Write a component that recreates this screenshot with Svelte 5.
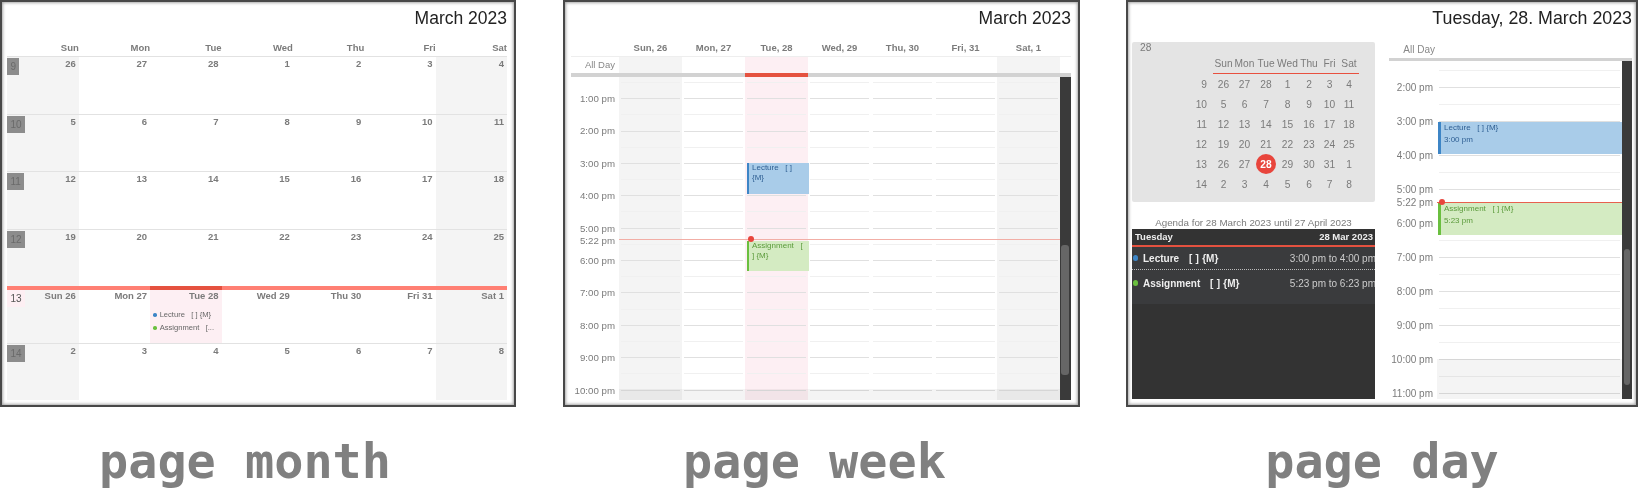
<script>
  const dayNames = ['Sun', 'Mon', 'Tue', 'Wed', 'Thu', 'Fri', 'Sat'];

  const monthRows = [
    { week: 9, days: ['26', '27', '28', '1', '2', '3', '4'] },
    { week: 10, days: ['5', '6', '7', '8', '9', '10', '11'] },
    { week: 11, days: ['12', '13', '14', '15', '16', '17', '18'] },
    { week: 12, days: ['19', '20', '21', '22', '23', '24', '25'] },
    { week: 13, current: true, days: ['Sun 26', 'Mon 27', 'Tue 28', 'Wed 29', 'Thu 30', 'Fri 31', 'Sat 1'] },
    { week: 14, days: ['2', '3', '4', '5', '6', '7', '8'] },
  ];

  const weekHead = ['Sun, 26', 'Mon, 27', 'Tue, 28', 'Wed, 29', 'Thu, 30', 'Fri, 31', 'Sat, 1'];
  const weekHours = ['1:00 pm', '2:00 pm', '3:00 pm', '4:00 pm', '5:00 pm', '6:00 pm', '7:00 pm', '8:00 pm', '9:00 pm', '10:00 pm'];
  const dayHours = ['2:00 pm', '3:00 pm', '4:00 pm', '5:00 pm', '6:00 pm', '7:00 pm', '8:00 pm', '9:00 pm', '10:00 pm', '11:00 pm'];

  const miniRows = [
    [9, 26, 27, 28, 1, 2, 3, 4],
    [10, 5, 6, 7, 8, 9, 10, 11],
    [11, 12, 13, 14, 15, 16, 17, 18],
    [12, 19, 20, 21, 22, 23, 24, 25],
    [13, 26, 27, 28, 29, 30, 31, 1],
    [14, 2, 3, 4, 5, 6, 7, 8],
  ];

  // the triple spaces are in the event titles themselves
  const lecture = 'Lecture   [ ] {M}';
  const assignment = 'Assignment   [ ] {M}';

  // half-hour lines: odd ones fall on the hour
  const slots = Array.from({ length: 22 }, (_, i) => i);
</script>

{#snippet lines()}
  {#each slots as i}
    <div class="slot" class:hour={i % 2 === 1}></div>
  {/each}
{/snippet}

<div class="page">
  <figure class="shot month">
    <div class="panel">
      <div class="title">March 2023</div>
      <div class="month-head">
        {#each dayNames as name}
          <div>{name}</div>
        {/each}
      </div>
      {#each monthRows as row}
        <div class="month-row" class:current={row.current}>
          <span class="wk">{row.week}</span>
          {#each row.days as day, i}
            <div class="cell" class:weekend={i === 0 || i === 6} class:today={row.current && i === 2}>
              <div class="num">{day}</div>
              {#if row.current && i === 2}
                <div class="chip first"><i class="dot blue"></i><span>{lecture}</span></div>
                <div class="chip"><i class="dot green"></i><span>{'Assignment   [...'}</span></div>
              {/if}
            </div>
          {/each}
        </div>
      {/each}
    </div>
    <figcaption>page month</figcaption>
  </figure>

  <figure class="shot week">
    <div class="panel">
      <div class="title">March 2023</div>
      <div class="week-head">
        <div class="gutter"></div>
        {#each weekHead as name}
          <div class="head-cell">{name}</div>
        {/each}
      </div>
      <div class="allday">
        <div class="gutter allday-label">All Day</div>
        {#each weekHead as _, i}
          <div class="col" class:weekend={i === 0 || i === 6} class:today={i === 2}></div>
        {/each}
      </div>
      <div class="bar"><span class="bar-today"></span></div>
      <div class="grid">
        <div class="gutter hours">
          {#each weekHours as h}
            <div class="hour-label">{h}</div>
          {/each}
        </div>
        {#each weekHead as _, i}
          <div class="col" class:weekend={i === 0 || i === 6} class:today={i === 2}>
            {@render lines()}
          </div>
        {/each}
        <div class="scroll"><div class="thumb"></div></div>

        <div class="late"></div>
        <div class="event lecture">{lecture}</div>
        <div class="event assignment">{assignment}</div>
        <div class="now-line"></div>
        <div class="now-dot"></div>
        <div class="now-label">5:22 pm</div>
      </div>
    </div>
    <figcaption>page week</figcaption>
  </figure>

  <figure class="shot day">
    <div class="panel">
      <div class="title">Tuesday, 28. March 2023</div>
      <div class="day-body">
        <div class="side">
          <div class="mini">
            <div class="mini-label">28</div>
            <div class="mini-grid">
              <div></div>
              {#each dayNames as name}
                <div class="mini-name">{name}</div>
              {/each}
              {#each miniRows as row, r}
                {#each row as n, c}
                  <div class="mini-cell" class:mini-wk={c === 0}>
                    {#if r === 4 && c === 3}
                      <span class="mini-today">{n}</span>
                    {:else}
                      {n}
                    {/if}
                  </div>
                {/each}
              {/each}
            </div>
          </div>
          <div class="agenda-title">Agenda for 28 March 2023 until 27 April 2023</div>
          <div class="agenda">
            <div class="agenda-head"><span>Tuesday</span><span>28 Mar 2023</span></div>
            <div class="agenda-list">
              <div class="agenda-row dotted">
                <i class="agenda-dot blue"></i>
                <span class="agenda-name">{lecture}</span>
                <span class="agenda-time">3:00 pm to 4:00 pm</span>
              </div>
              <div class="agenda-row">
                <i class="agenda-dot green"></i>
                <span class="agenda-name">{assignment}</span>
                <span class="agenda-time">5:23 pm to 6:23 pm</span>
              </div>
            </div>
          </div>
        </div>

        <div class="main">
          <div class="day-allday">All Day</div>
          <div class="bar"></div>
          <div class="grid">
            <div class="gutter hours">
              {#each dayHours as h}
                <div class="hour-label">{h}</div>
              {/each}
            </div>
            <div class="col wide">
              {@render lines()}
            </div>
            <div class="scroll"><div class="thumb"></div></div>

            <div class="late"></div>
            <div class="event lecture"><div>{lecture}</div><div>3:00 pm</div></div>
            <div class="event assignment"><div>{assignment}</div><div>5:23 pm</div></div>
            <div class="now-line"></div>
            <div class="now-dot"></div>
            <div class="now-label">5:22 pm</div>
          </div>
        </div>
      </div>
    </div>
    <figcaption>page day</figcaption>
  </figure>
</div>

<style>
  :global(body) {
    margin: 0;
    background: #fff;
  }

  .page {
    display: flex;
    width: 1641px;
    height: 489px;
    overflow: hidden;
    font-family: "Liberation Sans", Arial, sans-serif;
    font-size: 9.5px;
    color: #7b7b7b;
  }

  .shot {
    margin: 0;
    flex: none;
  }
  .shot.month { width: 516px; }
  .shot.week { width: 517px; margin-left: 47px; }
  .shot.day { width: 512px; margin-left: 46px; }

  .panel {
    box-sizing: border-box;
    height: 407px;
    border: 2px solid #484848;
    box-shadow: inset 0 0 3px 1px #a8a8a8;
    background: #fff;
    filter: blur(0.3px);
  }
  .month .panel { padding: 0 7px 0 5.4px; }
  .week .panel { padding: 0 7px 0 6px; }
  .day .panel { padding: 0 4px 0 4px; }

  figcaption {
    margin-top: 26px;
    font-family: "DejaVu Sans Mono", "Liberation Mono", monospace;
    font-weight: bold;
    font-size: 48.5px;
    line-height: 56px;
    color: #808080;
    text-align: center;
    white-space: pre;
  }
  .month figcaption { padding-right: 26px; }
  .week figcaption { padding-right: 14px; }

  .title {
    height: 31px;
    line-height: 32px;
    font-size: 17.5px;
    color: #222;
    text-align: right;
  }
  .day .title { font-size: 17.8px; }

  /* month */
  .month-head {
    display: grid;
    grid-template-columns: repeat(7, 1fr);
    box-sizing: border-box;
    height: 24px;
    padding-top: 8px;
    line-height: 14px;
    font-weight: bold;
    text-align: right;
    border-bottom: 1px solid #e2e2e2;
  }
  .month-row {
    position: relative;
    display: grid;
    grid-template-columns: repeat(7, 1fr);
    box-sizing: border-box;
    height: 57.2px;
    border-top: 1px solid #e2e2e2;
  }
  .month-head + .month-row { border-top: 0; }
  .month-row.current {
    border-top: 4px solid #ff7f73;
  }
  .cell {
    padding: 0 3px;
    position: relative;
  }
  .cell.weekend { background: #f4f4f4; }
  .cell.today { background: #fdeff3; }
  .current .cell.today::before {
    content: "";
    position: absolute;
    left: 0;
    right: 0;
    top: -4px;
    height: 4px;
    background: #e5513f;
  }
  .num {
    line-height: 14px;
    font-weight: bold;
    text-align: right;
  }
  .current .num { line-height: 12px; }
  .wk {
    position: absolute;
    left: 0;
    top: 1px;
    z-index: 1;
    height: 17px;
    padding: 0 3px;
    line-height: 17px;
    font-size: 10px;
    background: #8c8c8c;
    color: #6a6a6a;
  }
  .current .wk {
    top: 0;
    background: #fdeff3;
    color: #555;
  }
  .chip {
    display: flex;
    align-items: center;
    gap: 3px;
    height: 13px;
    font-size: 7.6px;
    color: #666;
    white-space: pre;
    overflow: hidden;
  }
  .chip.first { margin-top: 6.5px; }
  .dot {
    flex: none;
    width: 3.5px;
    height: 3.5px;
    border-radius: 50%;
  }
  .blue { background: #3d85c6; }
  .green { background: #6abf3f; }

  /* week */
  .week-head, .allday { display: flex; }
  .week-head {
    box-sizing: border-box;
    height: 24px;
    padding-top: 8px;
    line-height: 14px;
    font-weight: bold;
    border-bottom: 1px solid #eee;
  }
  .head-cell {
    width: 63px;
    text-align: center;
  }
  .gutter {
    flex: none;
    box-sizing: border-box;
    width: 48px;
  }
  .allday { height: 16.3px; }
  .allday-label {
    padding-right: 4px;
    line-height: 16px;
    text-align: right;
    color: #888;
  }
  .col {
    flex: none;
    width: 63px;
  }
  .col.weekend { background: #f4f4f4; }
  .col.today { background: #fdeff3; }
  .col.wide { width: 185px; }
  .bar {
    height: 3.7px;
    background: #d2d2d2;
    position: relative;
  }
  .bar-today {
    position: absolute;
    left: 174.4px;
    width: 63px;
    top: 0;
    bottom: 0;
    background: #e5513f;
  }
  .grid {
    position: relative;
    display: flex;
    height: 323px;
    overflow: hidden;
  }
  .hours {
    padding-right: 4px;
    padding-top: 5px;
    text-align: right;
    font-size: 9.7px;
  }
  .hour-label {
    height: 32.4px;
    line-height: 34px;
    white-space: nowrap;
  }
  .slot {
    box-sizing: border-box;
    height: 16.2px;
    margin: 0 2px;
    border-top: 1px solid #f0f0f0;
  }
  .slot.hour { border-top-color: #e0e0e0; }
  .week .slot:first-child { margin-top: 5px; }
  .scroll {
    flex: none;
    width: 11px;
    background: #3a3a3a;
  }
  .thumb {
    width: 8px;
    height: 130px;
    margin: 168px 0 0 1px;
    border-radius: 3px;
    background: #666;
  }
  .late {
    position: absolute;
    left: 48px;
    width: 441px;
    top: 312px;
    bottom: 0;
    background: rgba(0, 0, 0, 0.045);
  }
  .event {
    position: absolute;
    box-sizing: border-box;
    left: 176px;
    width: 62px;
    padding: 0 5.5px 0 3px;
    border-left: 2px solid;
    font-size: 8px;
    line-height: 10px;
    white-space: pre-wrap;
  }
  .lecture {
    top: 86px;
    height: 31.3px;
    background: #a9cce9;
    border-color: #3d85c6;
    color: #2f5f93;
  }
  .assignment {
    top: 163.7px;
    height: 30.3px;
    background: #d4ebc2;
    border-color: #6abf3f;
    color: #5b9a3b;
  }
  .now-line {
    position: absolute;
    left: 48px;
    width: 441px;
    top: 162px;
    height: 1px;
    background: #f2aea6;
  }
  .now-dot {
    position: absolute;
    left: 176.6px;
    top: 159.5px;
    width: 6px;
    height: 6px;
    border-radius: 50%;
    background: #e8453c;
  }
  .now-label {
    position: absolute;
    left: 0;
    width: 44px;
    top: 157px;
    line-height: 13px;
    font-size: 9.7px;
    text-align: right;
    background: #fff;
  }

  /* day */
  .day-body {
    display: flex;
    gap: 14px;
  }
  .side {
    flex: none;
    width: 243px;
  }
  .mini {
    box-sizing: border-box;
    height: 160px;
    margin-top: 9px;
    padding: 0 16px 0 8px;
    border-radius: 2px;
    background: #e4e4e4;
    font-size: 10.2px;
    color: #7b7b7b;
  }
  .mini-label {
    height: 12px;
    line-height: 12px;
  }
  .mini-grid {
    display: grid;
    grid-template-columns: 73px 21px 21px 22px 21px 22px 19px 20px;
    grid-template-rows: 20px repeat(6, 20px);
    text-align: center;
  }
  .mini-name {
    line-height: 19px;
    border-bottom: 1px solid #e8503f;
    height: 19px;
  }
  .mini-cell {
    display: flex;
    align-items: center;
    justify-content: center;
  }
  .mini-wk {
    justify-content: flex-end;
    padding-right: 6px;
  }
  .mini-today {
    display: flex;
    align-items: center;
    justify-content: center;
    flex: none;
    width: 20px;
    height: 20px;
    border-radius: 50%;
    background: #e8453c;
    color: #fff;
    font-weight: bold;
  }
  .agenda-title {
    margin-top: 15px;
    height: 12px;
    line-height: 12px;
    font-size: 9.8px;
    text-align: center;
    color: #7b7b7b;
    white-space: nowrap;
  }
  .agenda {
    height: 170px;
    background: #333;
    color: #fff;
    overflow: hidden;
  }
  .agenda-head {
    display: flex;
    justify-content: space-between;
    box-sizing: border-box;
    height: 18px;
    padding: 0 2px 2px 3px;
    line-height: 16px;
    font-weight: bold;
    color: #eee;
    border-bottom: 2px solid #e5513f;
  }
  .agenda-list {
    height: 57px;
    background: #3a3b3d;
  }
  .agenda-row {
    display: flex;
    align-items: center;
    box-sizing: border-box;
    height: 23px;
    overflow: hidden;
    white-space: pre;
  }
  .agenda-row.dotted {
    border-bottom: 1px dotted #bbb;
  }
  .agenda-row:last-child { height: 26px; }
  .agenda-dot {
    flex: none;
    width: 5.5px;
    height: 5.5px;
    margin-left: 0.5px;
    border-radius: 50%;
  }
  .agenda-name {
    margin-left: 5px;
    font-size: 10px;
    word-spacing: 0.5px;
    font-weight: bold;
    color: #eee;
  }
  .agenda-time {
    flex: none;
    margin-left: auto;
    margin-right: -1px;
    font-size: 10px;
    color: #ccc;
  }
  .main {
    flex: none;
    width: 243px;
  }
  .day-allday {
    box-sizing: border-box;
    height: 24.5px;
    padding: 10px 197px 0 0;
    line-height: 14px;
    font-size: 10px;
    text-align: right;
    color: #888;
    white-space: nowrap;
  }
  .day .grid { height: 338px; }
  .day .scroll { width: 10px; }
  .day .thumb {
    width: 6px;
    height: 136px;
    margin: 188px 0 0 2px;
  }
  .day .hours {
    padding-top: 9.3px;
    font-size: 10px;
  }
  .day .hour-label {
    height: 34px;
    line-height: 35px;
  }
  .day .slot {
    height: 17px;
  }
  .day .slot:first-child { margin-top: 9.3px; }
  .day .late {
    left: 48px;
    width: 185px;
    top: 298px;
  }
  .day .event {
    left: 49px;
    width: 184px;
    padding: 0 0 0 3px;
    border-left-width: 3px;
    line-height: 12px;
    white-space: pre;
  }
  .day .lecture { top: 60.7px; height: 32.3px; }
  .day .assignment { top: 142px; height: 31.7px; }
  .day .now-line {
    left: 48px;
    width: 185px;
    top: 141px;
    background: #e8604e;
  }
  .day .now-dot {
    left: 50px;
    top: 138px;
  }
  .day .now-label {
    top: 135px;
    width: 44px;
    font-size: 10px;
  }
</style>
